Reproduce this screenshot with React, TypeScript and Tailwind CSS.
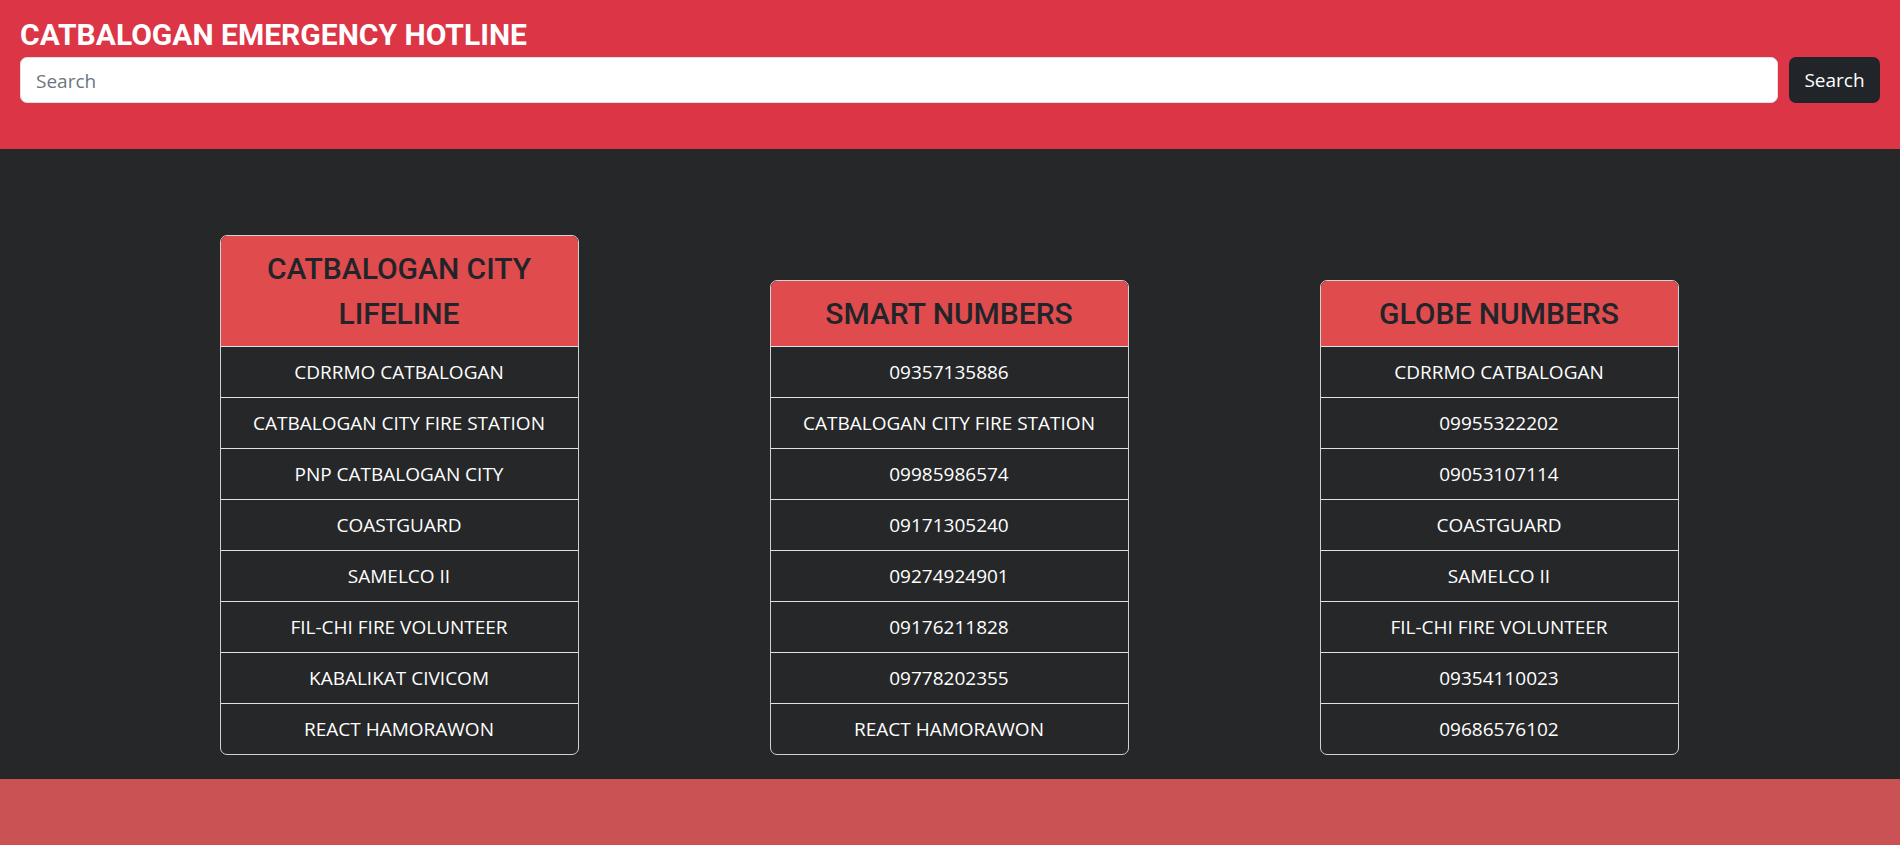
import React from "react";

const cards = [
  {
    title: "CATBALOGAN CITY LIFELINE",
    items: [
      "CDRRMO CATBALOGAN",
      "CATBALOGAN CITY FIRE STATION",
      "PNP CATBALOGAN CITY",
      "COASTGUARD",
      "SAMELCO II",
      "FIL-CHI FIRE VOLUNTEER",
      "KABALIKAT CIVICOM",
      "REACT HAMORAWON",
    ],
  },
  {
    title: "SMART NUMBERS",
    items: [
      "09357135886",
      "CATBALOGAN CITY FIRE STATION",
      "09985986574",
      "09171305240",
      "09274924901",
      "09176211828",
      "09778202355",
      "REACT HAMORAWON",
    ],
  },
  {
    title: "GLOBE NUMBERS",
    items: [
      "CDRRMO CATBALOGAN",
      "09955322202",
      "09053107114",
      "COASTGUARD",
      "SAMELCO II",
      "FIL-CHI FIRE VOLUNTEER",
      "09354110023",
      "09686576102",
    ],
  },
];

function Card({ title, items }: { title: string; items: string[] }) {
  return (
    <div className="w-[359px] rounded-[7px] border border-[#cfd2d5] overflow-hidden">
      <div className="bg-[#e04b4e] px-[19px] py-[10px] text-center">
        <h3 className="font-['Roboto',sans-serif] font-medium text-[30px] leading-[45px] text-[#212529]">
          {title}
        </h3>
      </div>
      {items.map((it, i) => (
        <div
          key={i}
          className="h-[51px] border-t border-[#dee2e6] flex items-center justify-center text-white text-[19px] font-['Open_Sans',sans-serif]"
        >
          {it}
        </div>
      ))}
    </div>
  );
}

export default function App() {
  return (
    <div className="w-full min-h-[845px] bg-[#262729] font-['Open_Sans',sans-serif]">
      <header className="bg-[#dc3545] h-[149px] px-[20px] pt-[17px]">
        <h1 className="font-['Roboto',sans-serif] font-bold text-[30px] leading-[35px] text-white mb-[5px]">
          CATBALOGAN EMERGENCY HOTLINE
        </h1>
        <div className="flex gap-[11px]">
          <input
            type="text"
            placeholder="Search"
            className="flex-1 h-[46px] rounded-[7px] bg-white border border-[#dee2e6] px-[15px] pt-[1px] text-[19px] text-[#212529] placeholder:text-[#6c757d] outline-none font-['Open_Sans',sans-serif]"
          />
          <button className="w-[91px] h-[46px] rounded-[7px] bg-[#212529] text-white text-[19px] pt-[1px] font-['Open_Sans',sans-serif]">
            Search
          </button>
        </div>
      </header>
      <main className="bg-[#262729] h-[630px] pt-[86px] pb-[25px]">
        <div className="flex justify-center items-end pr-[2px]">
          {cards.map((c) => (
            <div key={c.title} className="w-[550px] flex justify-center items-end">
              <Card title={c.title} items={c.items} />
            </div>
          ))}
        </div>
      </main>
      <footer className="bg-[#ca5254] h-[66px]" />
    </div>
  );
}
